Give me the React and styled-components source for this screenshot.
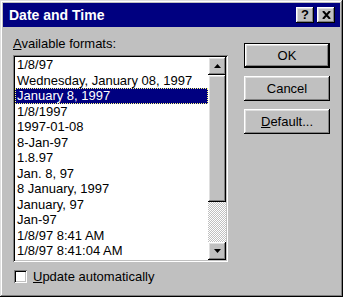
import styled, { createGlobalStyle } from "styled-components";

const GlobalStyle = createGlobalStyle`
  html, body {
    margin: 0;
    padding: 0;
    background: #c0c0c0;
  }
  body {
    font-family: "Liberation Sans", Arial, sans-serif;
    font-size: 13px;
    color: #000;
  }
`;

const formats = [
  "1/8/97",
  "Wednesday, January 08, 1997",
  "January 8, 1997",
  "1/8/1997",
  "1997-01-08",
  "8-Jan-97",
  "1.8.97",
  "Jan. 8, 97",
  "8 January, 1997",
  "January, 97",
  "Jan-97",
  "1/8/97 8:41 AM",
  "1/8/97 8:41:04 AM",
];

export default function App() {
  return (
    <>
      <GlobalStyle />
      <Window>
        <TitleBar>
          <Title>Date and Time</Title>
          <CaptionButton>?</CaptionButton>
          <CaptionButton $close>
            <svg width="9" height="8" viewBox="0 0 9 8">
              <path d="M1 0 L8 8 M8 0 L1 8" stroke="#000" strokeWidth="2" fill="none" />
            </svg>
          </CaptionButton>
        </TitleBar>
        <Content>
          <LeftColumn>
            <Label>
              <u>A</u>vailable formats:
            </Label>
            <ListBox>
              <Items>
                {formats.map((f, i) => (
                  <Item key={f} $selected={i === 2}>
                    {f}
                  </Item>
                ))}
              </Items>
              <ScrollBar>
                <ArrowButton>
                  <svg width="7" height="4" viewBox="0 0 7 4">
                    <path d="M3.5 0 L7 4 L0 4 Z" fill="#000" />
                  </svg>
                </ArrowButton>
                <Thumb />
                <Track />
                <ArrowButton>
                  <svg width="7" height="4" viewBox="0 0 7 4">
                    <path d="M0 0 L7 0 L3.5 4 Z" fill="#000" />
                  </svg>
                </ArrowButton>
              </ScrollBar>
            </ListBox>
            <CheckRow>
              <CheckBox />
              <span>
                <u>U</u>pdate automatically
              </span>
            </CheckRow>
          </LeftColumn>
          <ButtonColumn>
            <Button $default>OK</Button>
            <Button>Cancel</Button>
            <Button>
              <u>D</u>efault...
            </Button>
          </ButtonColumn>
        </Content>
      </Window>
    </>
  );
}

const raised = `
  box-shadow: inset -1px -1px #000, inset 1px 1px #fff,
    inset -2px -2px #808080, inset 2px 2px #dfdfdf;
`;

const Window = styled.div`
  width: 343px;
  height: 297px;
  box-sizing: border-box;
  padding: 3px;
  background: #c0c0c0;
  box-shadow: inset -1px -1px #000, inset 1px 1px #dfdfdf,
    inset -2px -2px #808080, inset 2px 2px #fff;
  display: flex;
  flex-direction: column;
`;

const TitleBar = styled.div`
  height: 24px;
  background: #000080;
  display: flex;
  align-items: center;
  gap: 3px;
  padding: 0 5px 0 6px;
`;

const Title = styled.div`
  flex: 1;
  color: #fff;
  font-weight: bold;
  font-size: 14px;
`;

const CaptionButton = styled.div`
  width: 18px;
  height: 16px;
  background: #c0c0c0;
  ${raised}
  display: flex;
  align-items: center;
  justify-content: center;
  font-weight: bold;
  font-size: 13px;
  line-height: 16px;
`;

const Content = styled.div`
  display: flex;
  padding: 9px 10px 0 10px;
`;

const LeftColumn = styled.div`
  width: 215px;
  display: flex;
  flex-direction: column;
`;

const Label = styled.div`
  line-height: 15px;
  margin-bottom: 4px;
`;

const ListBox = styled.div`
  height: 207px;
  box-sizing: border-box;
  padding: 2px;
  background: #fff;
  box-shadow: inset 1px 1px #808080, inset -1px -1px #fff,
    inset 2px 2px #000, inset -2px -2px #c0c0c0;
  display: flex;
`;

const Items = styled.div`
  flex: 1;
  overflow: hidden;
`;

const Item = styled.div`
  height: 15.5px;
  line-height: 15.5px;
  padding-left: 2px;
  white-space: nowrap;
  box-sizing: border-box;
  background: ${(p) => (p.$selected ? "#000080" : "transparent")};
  color: ${(p) => (p.$selected ? "#fff" : "#000")};
  outline: ${(p) => (p.$selected ? "1px dotted #ffff7f" : "none")};
  outline-offset: -1px;
`;

const ScrollBar = styled.div`
  width: 18px;
  display: flex;
  flex-direction: column;
`;

const ArrowButton = styled.div`
  height: 18px;
  background: #c0c0c0;
  ${raised}
  display: flex;
  align-items: center;
  justify-content: center;
`;

const Thumb = styled.div`
  height: 127px;
  background: #c0c0c0;
  ${raised}
`;

const Track = styled.div`
  flex: 1;
  background: repeating-conic-gradient(#c0c0c0 0 25%, #fff 0 50%) 0 0 / 2px 2px;
`;

const CheckRow = styled.div`
  display: flex;
  align-items: center;
  gap: 6px;
  margin-top: 7px;
  padding-left: 1px;
`;

const CheckBox = styled.div`
  width: 13px;
  height: 13px;
  box-sizing: border-box;
  background: #fff;
  box-shadow: inset 1px 1px #808080, inset -1px -1px #fff,
    inset 2px 2px #000, inset -2px -2px #c0c0c0;
`;

const ButtonColumn = styled.div`
  margin-left: auto;
  margin-top: 7px;
  display: flex;
  flex-direction: column;
  gap: 8px;
`;

const Button = styled.div`
  width: 86px;
  height: 25px;
  box-sizing: border-box;
  background: #c0c0c0;
  display: flex;
  align-items: center;
  justify-content: center;
  box-shadow: ${(p) =>
    p.$default
      ? "inset 0 0 0 1px #000, inset -2px -2px #000, inset 2px 2px #fff, inset -3px -3px #808080, inset 3px 3px #dfdfdf"
      : "inset -1px -1px #000, inset 1px 1px #fff, inset -2px -2px #808080, inset 2px 2px #dfdfdf"};
`;
